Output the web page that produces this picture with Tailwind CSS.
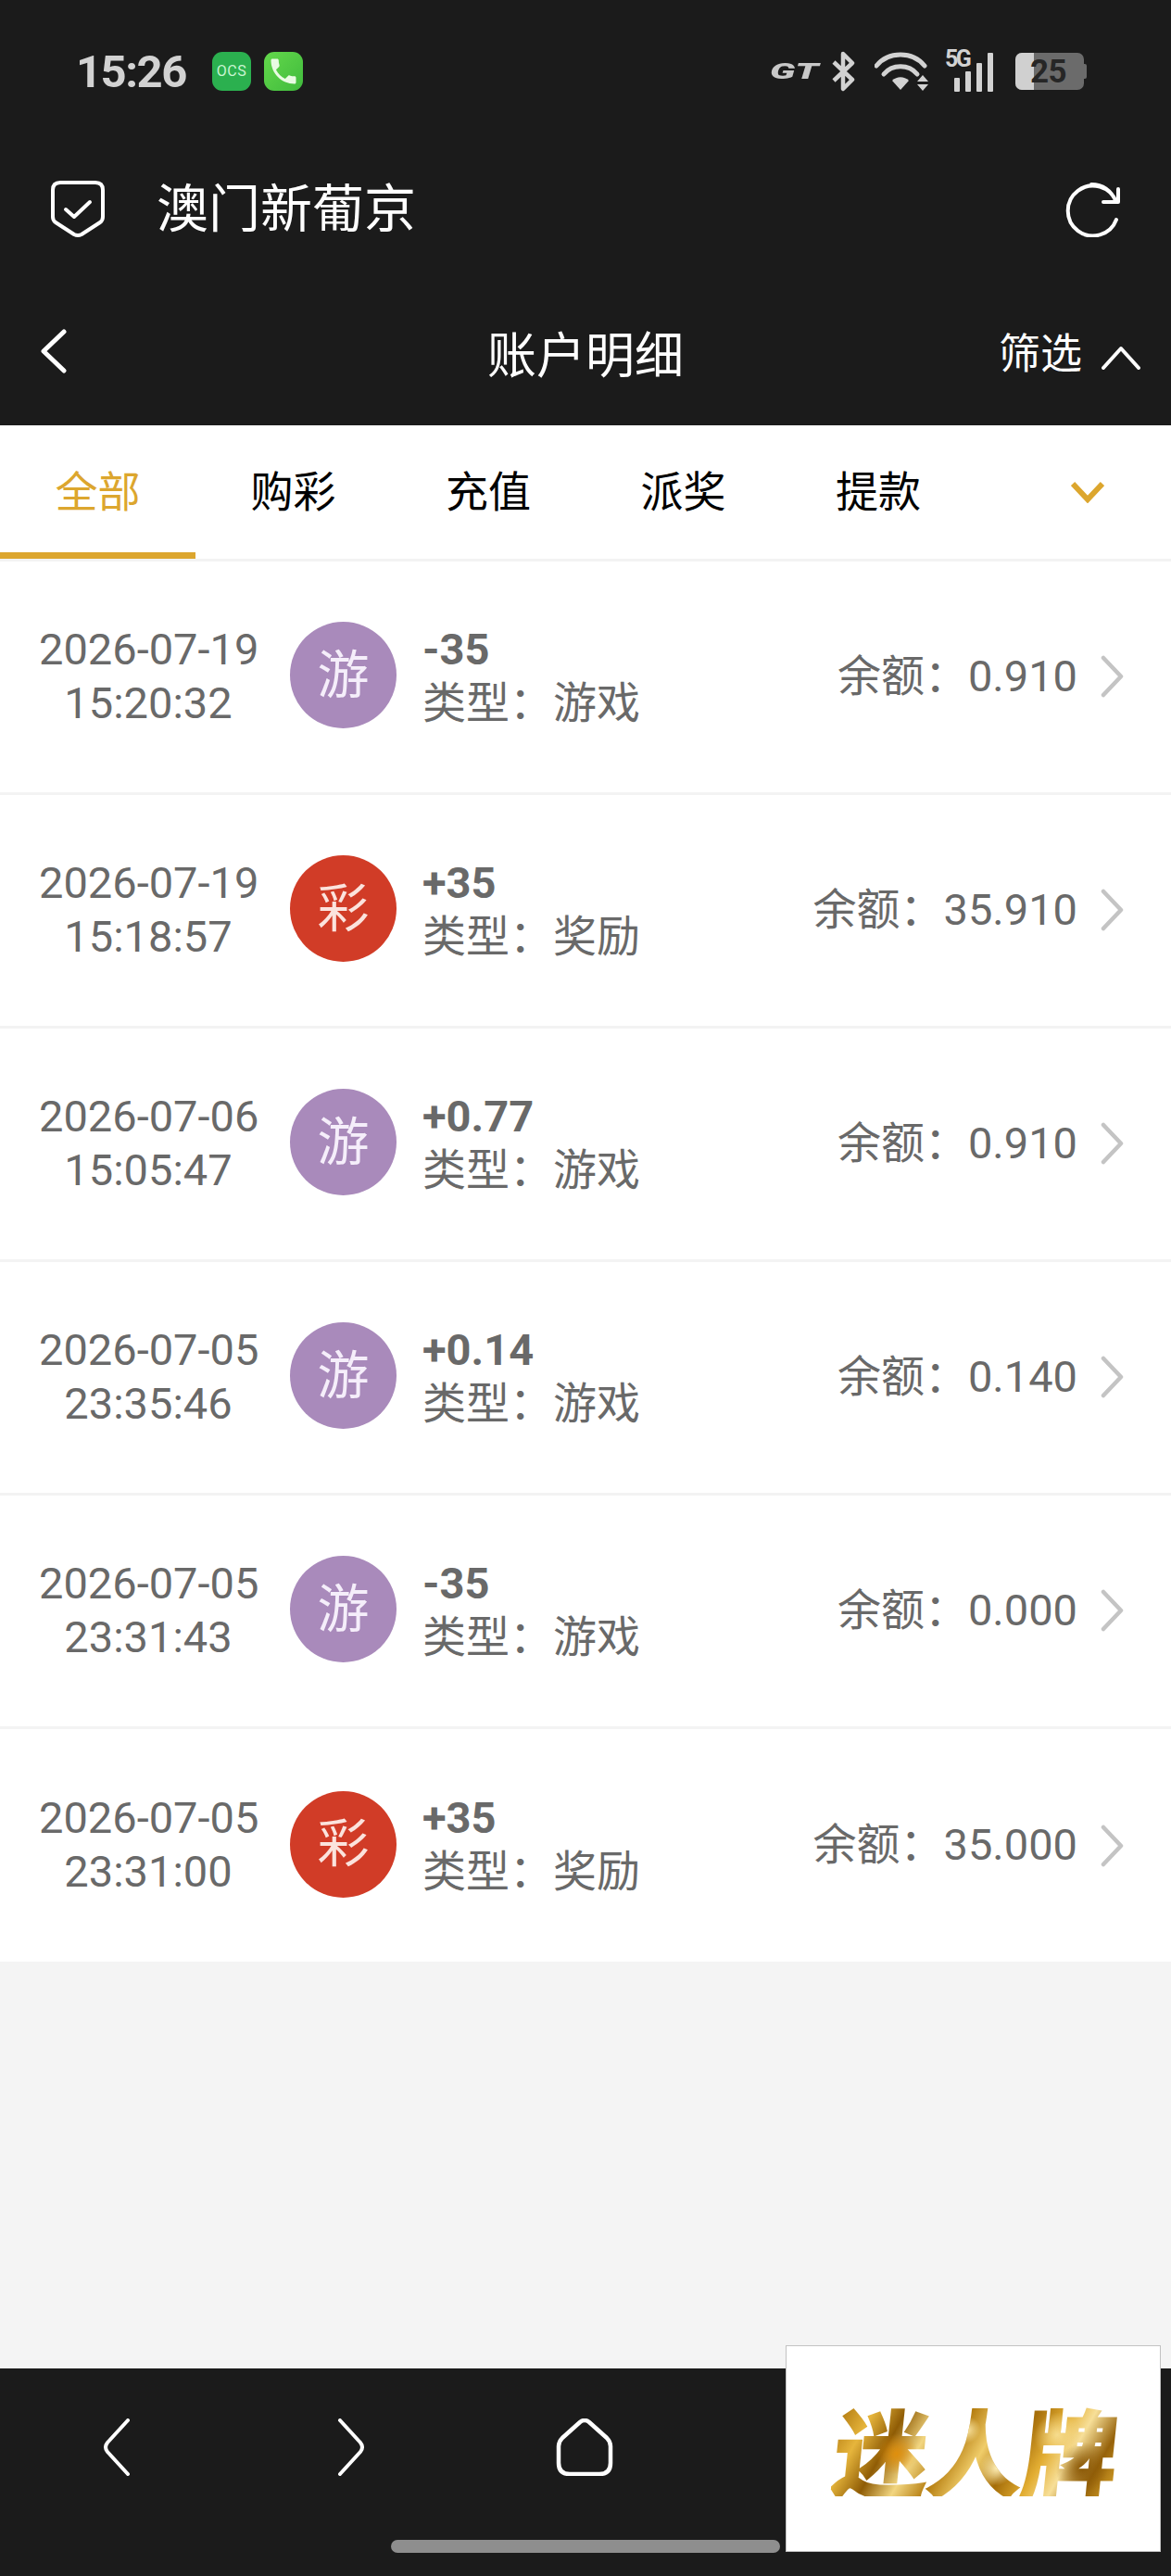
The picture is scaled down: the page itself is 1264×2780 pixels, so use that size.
<!DOCTYPE html>
<html lang="zh-CN">
  <head>
    <meta charset="UTF-8" />
    <meta name="viewport" content="width=device-width, initial-scale=1.0" />
    <title>账户明细</title>
    <script src="https://cdn.jsdelivr.net/npm/@tailwindcss/browser@4"></script>
  </head>
  <body class="bg-[#f4f4f4] font-['Roboto','Noto_Sans_CJK_SC',sans-serif]">
    <div class="flex flex-col h-[2780px] w-[1264px] overflow-hidden relative">
      <!-- top dark header -->
      <header class="bg-[#1b1b1b] h-[459px] shrink-0 text-white">
        <!-- status bar -->
        <div class="h-[154px] flex items-center pl-[82px] pr-[94px]">
          <span class="text-[49px] leading-none font-bold text-[#d2d2d2] w-[118px] tracking-[-1.5px]">15:26</span>
          <div class="ml-[29px] w-[42px] h-[42px] rounded-[11px] bg-[#2bb04f] flex items-center justify-center text-[16px] leading-none text-[#c9f5d2] tracking-[0.5px]">OCS</div>
          <div class="ml-[14px] w-[42px] h-[42px] rounded-[11px] bg-linear-to-br from-[#63d84b] to-[#3fbb3d] flex items-center justify-center">
            <svg width="36" height="36" viewBox="0 0 24 24"><path fill="#e9fbe3" d="M6.62 10.79c1.44 2.83 3.76 5.14 6.59 6.59l2.2-2.2c.27-.27.67-.36 1.02-.24 1.12.37 2.33.57 3.57.57.55 0 1 .45 1 1V20c0 .55-.45 1-1 1-9.39 0-17-7.61-17-17 0-.55.45-1 1-1h3.5c.55 0 1 .45 1 1 0 1.25.2 2.45.57 3.57.11.35.03.74-.25 1.02l-2.2 2.2z"/></svg>
          </div>

          <div class="ml-auto flex items-center">
            <span class="w-[55px] inline-block origin-left scale-x-[1.8] text-[23px] leading-none font-black italic text-[#c8c8c8]">GT</span>
            <svg class="ml-[12px]" width="26" height="44" viewBox="0 0 26 44" fill="none" stroke="#d2d2d2" stroke-width="4.5" stroke-linejoin="round"><path d="M2 12 L22 31 L12 41 V3 L22 13 L2 32"/></svg>
            <svg class="ml-[20px]" width="58" height="42" viewBox="0 0 58 42" fill="none" stroke="#d2d2d2" stroke-width="5" stroke-linecap="round"><path d="M2 15 C15 -1 41 -1 54 15"/><path d="M10 24 C19 13 37 13 46 24"/><path fill="#d2d2d2" stroke="none" d="M19 31 C24 26 32 26 37 31 L28 41 Z"/><path fill="#d2d2d2" stroke="none" d="M52 25 L58 32 H46 Z M46 35 H58 L52 42 Z"/></svg>
            <div class="ml-[18px] relative w-[55px] h-[43px]">
              <span class="absolute left-0 top-[-2px] text-[25px] leading-[20px] font-bold text-[#d2d2d2] tracking-[-2.5px]">5G</span>
              <div class="absolute left-[10px] bottom-0 flex items-end gap-[6px]">
                <div class="w-[6px] h-[15px] bg-[#d2d2d2] rounded-[1px]"></div>
                <div class="w-[6px] h-[22px] bg-[#d2d2d2] rounded-[1px]"></div>
                <div class="w-[6px] h-[31px] bg-[#d2d2d2] rounded-[1px]"></div>
                <div class="w-[6px] h-[42px] bg-[#d2d2d2] rounded-[1px]"></div>
              </div>
            </div>
            <div class="ml-[21px] relative w-[74px] h-[40px] rounded-[7px] bg-[#6b6b6b]">
              <div class="absolute left-0 top-0 w-[20px] h-full bg-[#d0d0d0] rounded-l-[7px]"></div>
              <div class="absolute right-[-3px] top-[12px] w-[3px] h-[16px] bg-[#6b6b6b] rounded-r-[2px]"></div>
              <span class="absolute left-[16px] top-[3px] text-[35px] leading-[35px] font-bold text-[#262626] tracking-[-0.5px]">25</span>
            </div>
          </div>
        </div>

        <!-- app bar -->
        <div class="h-[144px] flex items-center pl-[55px] pr-[55px]">
          <svg width="58" height="62" viewBox="0 0 58 62" fill="none" stroke="#ffffff" stroke-width="4" stroke-linecap="round" stroke-linejoin="round">
            <path d="M10 2 H48 Q56 2 56 10 V39 Q56 43 53 45 L33 58 Q29 60 25 58 L5 45 Q2 43 2 39 V10 Q2 2 10 2 Z"/>
            <path d="M16 31 L25 39 L42 23"/>
          </svg>
          <h1 class="ml-[56px] text-[56px] leading-none font-normal">澳门新葡京</h1>
          <svg class="ml-auto" width="60" height="60" viewBox="0 0 60 60" fill="none" stroke="#ffffff" stroke-width="4" stroke-linecap="round" stroke-linejoin="round">
            <path d="M56 41 A27 27 0 1 1 56 22 C52 13 44 3 29 3"/>
            <path d="M42 22 H58 V8"/>
          </svg>
        </div>

        <!-- page title row -->
        <div class="h-[161px] flex items-center relative pl-[44px] pr-[33px]">
          <svg width="28" height="48" viewBox="0 0 28 48" fill="none" stroke="#ffffff" stroke-width="5" stroke-linecap="round" stroke-linejoin="round"><path d="M25 3 L3 24 L25 45"/></svg>
          <h2 class="absolute left-0 right-0 top-[57px] text-center text-[53px] leading-[60px] font-normal">账户明细</h2>
          <span class="ml-auto mt-[7px] text-[45px] leading-none">筛选</span>
          <svg class="ml-[21px] mt-[15px]" width="42" height="26" viewBox="0 0 42 26" fill="none" stroke="#ffffff" stroke-width="4" stroke-linecap="round" stroke-linejoin="round"><path d="M2 24 L21 3 L40 24"/></svg>
        </div>
      </header>

      <!-- tabs -->
      <nav class="h-[147px] bg-white border-b-[3px] border-[#f3f3f3] flex shrink-0 relative text-[46px] text-black">
        <div class="w-[211px] h-[144px] flex items-center justify-center text-[#dca62e] border-b-[7px] border-[#dca62e] pt-[7px]">全部</div>
        <div class="w-[211px] h-[144px] flex items-center justify-center">购彩</div>
        <div class="w-[210px] h-[144px] flex items-center justify-center">充值</div>
        <div class="w-[211px] h-[144px] flex items-center justify-center">派奖</div>
        <div class="w-[210px] h-[144px] flex items-center justify-center">提款</div>
        <svg class="ml-[103px] mt-[60px]" width="36" height="24" viewBox="0 0 36 24" fill="none" stroke="#dca62e" stroke-width="6"><path d="M2 3 L18 20 L34 3"/></svg>
      </nav>

      <!-- records -->
      <main class="flex-1 text-[47px] leading-[58px] text-[#696969]">
        <div class="h-[252px] bg-white border-b-[3px] border-[#f3f3f3] flex items-center">
          <div class="ml-[42px] w-[236px] mb-[2px] text-center whitespace-nowrap">2026-07-19<br />15:20:32</div>
          <div class="ml-[35px] mb-[4px] w-[115px] h-[115px] rounded-full bg-[#a98abb] flex items-center justify-center text-[56px] text-[#f5eefa]">游</div>
          <div class="ml-[28px] mb-[2px]"><div class="font-bold">-35</div><div>类型<span class="leading-none font-['Noto_Sans_CJK_TC']">：</span>游戏</div></div>
          <div class="ml-auto mb-[2px]">余额<span class="leading-none font-['Noto_Sans_CJK_TC']">：</span>0.910</div>
          <svg class="ml-[25px] mr-[51px] mb-[1px]" width="25" height="46" viewBox="0 0 25 46" fill="none" stroke="#c4c4c4" stroke-width="4.5" stroke-linecap="round" stroke-linejoin="round"><path d="M3 3 L22 23 L3 43"/></svg>
        </div>
        <div class="h-[252px] bg-white border-b-[3px] border-[#f3f3f3] flex items-center">
          <div class="ml-[42px] w-[236px] mb-[2px] text-center whitespace-nowrap">2026-07-19<br />15:18:57</div>
          <div class="ml-[35px] mb-[4px] w-[115px] h-[115px] rounded-full bg-[#d13c27] flex items-center justify-center text-[56px] text-[#fbe3dd]">彩</div>
          <div class="ml-[28px] mb-[2px]"><div class="font-bold">+35</div><div>类型<span class="leading-none font-['Noto_Sans_CJK_TC']">：</span>奖励</div></div>
          <div class="ml-auto mb-[2px]">余额<span class="leading-none font-['Noto_Sans_CJK_TC']">：</span>35.910</div>
          <svg class="ml-[25px] mr-[51px] mb-[1px]" width="25" height="46" viewBox="0 0 25 46" fill="none" stroke="#c4c4c4" stroke-width="4.5" stroke-linecap="round" stroke-linejoin="round"><path d="M3 3 L22 23 L3 43"/></svg>
        </div>
        <div class="h-[252px] bg-white border-b-[3px] border-[#f3f3f3] flex items-center">
          <div class="ml-[42px] w-[236px] mb-[2px] text-center whitespace-nowrap">2026-07-06<br />15:05:47</div>
          <div class="ml-[35px] mb-[4px] w-[115px] h-[115px] rounded-full bg-[#a98abb] flex items-center justify-center text-[56px] text-[#f5eefa]">游</div>
          <div class="ml-[28px] mb-[2px]"><div class="font-bold">+0.77</div><div>类型<span class="leading-none font-['Noto_Sans_CJK_TC']">：</span>游戏</div></div>
          <div class="ml-auto mb-[2px]">余额<span class="leading-none font-['Noto_Sans_CJK_TC']">：</span>0.910</div>
          <svg class="ml-[25px] mr-[51px] mb-[1px]" width="25" height="46" viewBox="0 0 25 46" fill="none" stroke="#c4c4c4" stroke-width="4.5" stroke-linecap="round" stroke-linejoin="round"><path d="M3 3 L22 23 L3 43"/></svg>
        </div>
        <div class="h-[252px] bg-white border-b-[3px] border-[#f3f3f3] flex items-center">
          <div class="ml-[42px] w-[236px] mb-[2px] text-center whitespace-nowrap">2026-07-05<br />23:35:46</div>
          <div class="ml-[35px] mb-[4px] w-[115px] h-[115px] rounded-full bg-[#a98abb] flex items-center justify-center text-[56px] text-[#f5eefa]">游</div>
          <div class="ml-[28px] mb-[2px]"><div class="font-bold">+0.14</div><div>类型<span class="leading-none font-['Noto_Sans_CJK_TC']">：</span>游戏</div></div>
          <div class="ml-auto mb-[2px]">余额<span class="leading-none font-['Noto_Sans_CJK_TC']">：</span>0.140</div>
          <svg class="ml-[25px] mr-[51px] mb-[1px]" width="25" height="46" viewBox="0 0 25 46" fill="none" stroke="#c4c4c4" stroke-width="4.5" stroke-linecap="round" stroke-linejoin="round"><path d="M3 3 L22 23 L3 43"/></svg>
        </div>
        <div class="h-[252px] bg-white border-b-[3px] border-[#f3f3f3] flex items-center">
          <div class="ml-[42px] w-[236px] mb-[2px] text-center whitespace-nowrap">2026-07-05<br />23:31:43</div>
          <div class="ml-[35px] mb-[4px] w-[115px] h-[115px] rounded-full bg-[#a98abb] flex items-center justify-center text-[56px] text-[#f5eefa]">游</div>
          <div class="ml-[28px] mb-[2px]"><div class="font-bold">-35</div><div>类型<span class="leading-none font-['Noto_Sans_CJK_TC']">：</span>游戏</div></div>
          <div class="ml-auto mb-[2px]">余额<span class="leading-none font-['Noto_Sans_CJK_TC']">：</span>0.000</div>
          <svg class="ml-[25px] mr-[51px] mb-[1px]" width="25" height="46" viewBox="0 0 25 46" fill="none" stroke="#c4c4c4" stroke-width="4.5" stroke-linecap="round" stroke-linejoin="round"><path d="M3 3 L22 23 L3 43"/></svg>
        </div>
        <div class="h-[251px] bg-white flex items-center">
          <div class="ml-[42px] w-[236px] mb-[1px] text-center whitespace-nowrap">2026-07-05<br />23:31:00</div>
          <div class="ml-[35px] mb-[3px] w-[115px] h-[115px] rounded-full bg-[#d13c27] flex items-center justify-center text-[56px] text-[#fbe3dd]">彩</div>
          <div class="ml-[28px] mb-[1px]"><div class="font-bold">+35</div><div>类型<span class="leading-none font-['Noto_Sans_CJK_TC']">：</span>奖励</div></div>
          <div class="ml-auto mb-[1px]">余额<span class="leading-none font-['Noto_Sans_CJK_TC']">：</span>35.000</div>
          <svg class="ml-[25px] mr-[51px]" width="25" height="46" viewBox="0 0 25 46" fill="none" stroke="#c4c4c4" stroke-width="4.5" stroke-linecap="round" stroke-linejoin="round"><path d="M3 3 L22 23 L3 43"/></svg>
        </div>
      </main>

      <!-- browser bottom bar -->
      <footer class="h-[224px] bg-[#1b1b1b] shrink-0 pt-[54px]">
        <div class="flex items-start h-[62px]">
          <svg class="ml-[111px]" width="30" height="62" viewBox="0 0 30 62" fill="none" stroke="#ffffff" stroke-width="4" stroke-linecap="round" stroke-linejoin="round"><path d="M27 2 L5 26 Q1 31 5 36 L27 60"/></svg>
          <svg class="ml-[223px]" width="30" height="62" viewBox="0 0 30 62" fill="none" stroke="#ffffff" stroke-width="4" stroke-linecap="round" stroke-linejoin="round"><path d="M3 2 L25 26 Q29 31 25 36 L3 60"/></svg>
          <svg class="ml-[206px]" width="62" height="62" viewBox="0 0 62 62" fill="none" stroke="#ffffff" stroke-width="4.5" stroke-linejoin="round"><path d="M26 4 Q31 0 36 4 L55 21 Q59 25 59 30 V48 Q59 60 47 60 H15 Q3 60 3 48 V30 Q3 25 7 21 Z"/></svg>
        </div>
        <div class="ml-[422px] mt-[69px] w-[420px] h-[14px] rounded-full bg-[#8e8e8e]"></div>
      </footer>

      <!-- floating logo ad -->
      <div class="absolute left-[848px] top-[2531px] w-[405px] h-[223px] bg-white border border-[#c2c2c2] flex items-center justify-center pl-[6px]">
        <span class="inline-block -skew-x-6 whitespace-nowrap text-[102px] leading-none font-bold font-['Noto_Sans_CJK_SC',sans-serif] text-transparent [-webkit-text-stroke:3px_transparent] bg-clip-text bg-[radial-gradient(circle_at_22%_55%,#e08f0c_0,transparent_9%),radial-gradient(circle_at_46%_30%,#fbe7a6_0,transparent_8%),radial-gradient(circle_at_58%_70%,#fff0b8_0,transparent_10%),radial-gradient(circle_at_78%_35%,#f6dc8e_0,transparent_10%),radial-gradient(circle_at_88%_70%,#8a5806_0,transparent_10%),linear-gradient(115deg,#a86f08_0%,#e6b53c_12%,#8f5c05_22%,#f2d681_32%,#b57d10_42%,#f0cd6a_52%,#a46c08_62%,#e3ae33_72%,#f7df98_80%,#96620a_90%,#d9a52b_100%)]">迷人牌</span>
      </div>
    </div>
  </body>
</html>
